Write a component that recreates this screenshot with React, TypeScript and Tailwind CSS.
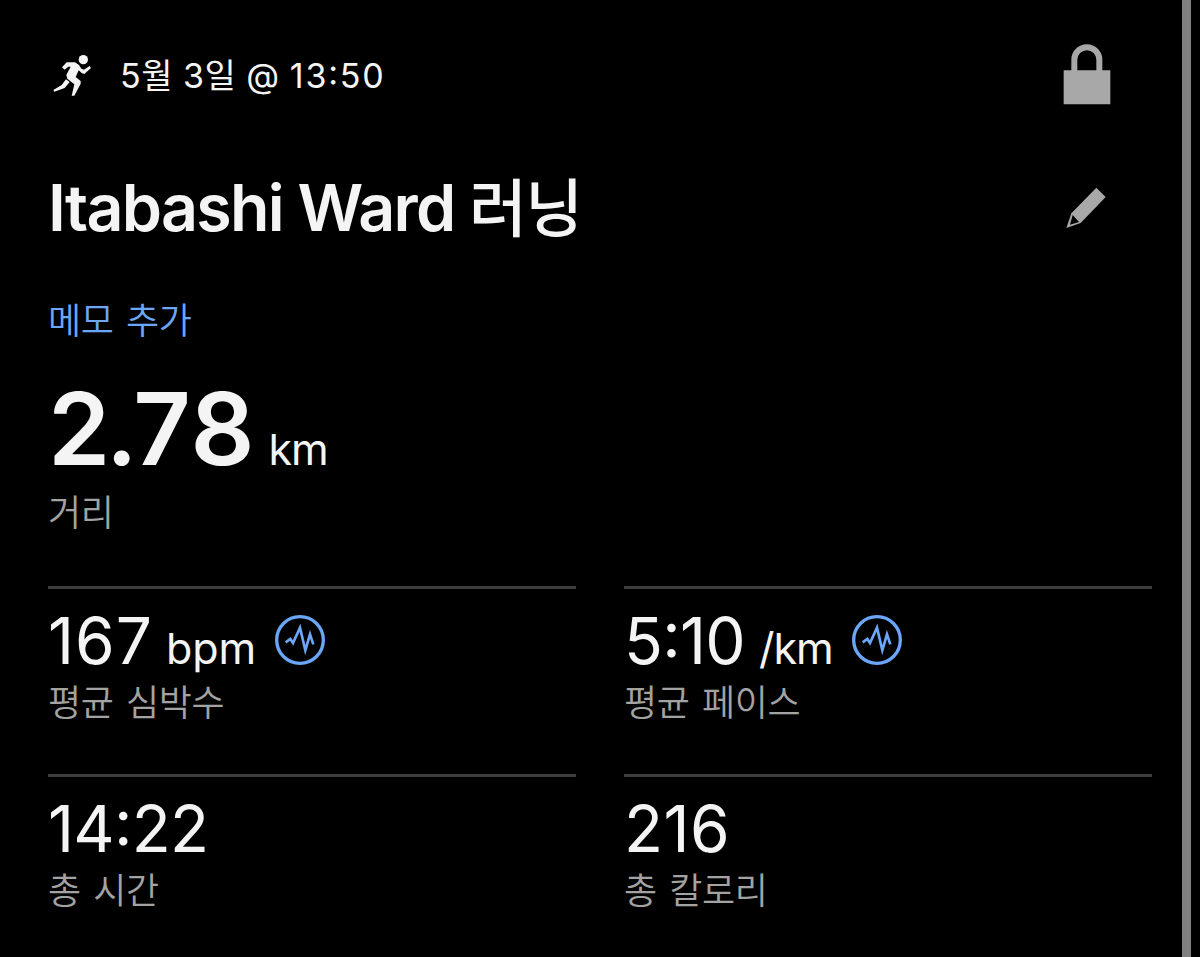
import type { ReactNode } from "react";

function RunnerIcon() {
  return (
    <svg className="h-[42px] w-[39px]" viewBox="40 41 117 126" fill="currentColor">
      <circle cx="131" cy="58" r="14" />
      <path d="M67 81 81 66h25l12 8 7 11 8 3 17-11 4 6-20 18-8-3-9-8-9 20 15 12v8l-19 36h-8l8-34-21-17-3-11 13-25h-7L75 88Z" />
      <path d="m79 117 11 8-15 18-31 11-3-5 25-15Z" />
    </svg>
  );
}

function LockIcon() {
  return (
    <svg className="h-[61px] w-12" viewBox="68 43 144 183">
      <path
        d="M102 126V90a37.5 37.5 0 0 1 75 0v36"
        fill="none"
        stroke="currentColor"
        strokeWidth="18"
      />
      <path d="M70 122h140v102H70z" fill="currentColor" />
    </svg>
  );
}

function PencilIcon() {
  return (
    <svg className="h-[42px] w-[42px]" viewBox="77 469 126 126" fill="currentColor">
      <path
        fillRule="evenodd"
        d="m81 592 15-44 75-77 28 28-75 78ZM100 553l-8 29 27-8Z"
      />
    </svg>
  );
}

function PulseIcon() {
  return (
    <svg
      className="h-[50px] w-[50px] text-[#6ba6f8]"
      viewBox="703 106 150 150"
      fill="none"
      stroke="currentColor"
    >
      <circle cx="778" cy="181" r="70" strokeWidth="10" />
      <path d="m735 188 14-10 8 12 21-46 16 68 14-48 10 30" strokeWidth="8" />
    </svg>
  );
}

function Label({ children }: { children: ReactNode }) {
  return (
    <div className="h-12 whitespace-nowrap font-['Noto_Sans_CJK_KR',sans-serif] text-[36px] font-[350] leading-[48px] tracking-[-0.4px] [word-spacing:5px] text-[#a3a3a3]">
      {children}
    </div>
  );
}

type StatProps = {
  value: string;
  valueClass: string;
  unit?: string;
  unitClass?: string;
  label: string;
  chart?: boolean;
};

function Stat({ value, valueClass, unit, unitClass, label, chart }: StatProps) {
  return (
    <div className="h-[188px] border-t-[3px] border-[#3d3d3d] pt-4">
      <div className="flex h-[71px] items-start">
        <div className="flex items-baseline leading-[71px]">
          <span className={`text-[64px] [font-feature-settings:'case'] ${valueClass}`}>
            {value}
          </span>
          {unit && <span className={`text-[43px] ${unitClass}`}>{unit}</span>}
        </div>
        {chart && (
          <div className="ml-[19px] mt-2.5">
            <PulseIcon />
          </div>
        )}
      </div>
      <Label>{label}</Label>
    </div>
  );
}

const stats: StatProps[] = [
  {
    value: "167",
    valueClass: "tracking-[1px]",
    unit: "bpm",
    unitClass: "ml-[13px] tracking-[0px]",
    label: "평균 심박수",
    chart: true,
  },
  {
    value: "5:10",
    valueClass: "tracking-[-0.7px]",
    unit: "/km",
    unitClass: "ml-3.5 tracking-[-1px]",
    label: "평균 페이스",
    chart: true,
  },
  { value: "14:22", valueClass: "tracking-[-0.7px]", label: "총 시간" },
  { value: "216", valueClass: "tracking-[0.5px]", label: "총 칼로리" },
];

export default function App() {
  return (
    <div className="flex h-[957px] w-[1200px] overflow-hidden bg-black font-['Inter','Noto_Sans_CJK_KR',sans-serif] text-[#f4f4f4]">
      <main className="w-[1182px] pl-12 pr-[30px] pt-[45px]">
        <header className="flex h-[60px] items-center justify-between pr-[41.5px]">
          <div className="flex items-center">
            <div className="ml-[5px]">
              <RunnerIcon />
            </div>
            <span className="ml-7 mt-px whitespace-pre text-[34px] font-[380] leading-[60px] tracking-[0.5px]">
              5월 3일 @{" "}
              <span className="tracking-[1.8px] [font-feature-settings:'case']">
                13:50
              </span>
            </span>
          </div>
          <div className="-mt-px text-[#a8a8a8]">
            <LockIcon />
          </div>
        </header>

        <div className="mt-[62px] flex h-20 items-center justify-between pr-[45px]">
          <h1 className="mt-px whitespace-nowrap text-[64.5px] font-semibold leading-[80px] tracking-[-1.7px]">
            Itabashi Ward{" "}
            <span className="text-[63px] font-medium">러닝</span>
          </h1>
          <div className="mt-px text-[#a8a8a8]">
            <PencilIcon />
          </div>
        </div>

        <a
          href="#memo"
          className="mt-[47px] block h-12 font-['Noto_Sans_CJK_KR',sans-serif] text-[36px] font-[350] leading-[48px] tracking-[-0.4px] [word-spacing:5px] text-[#6ba6f8]"
        >
          메모 추가
        </a>

        <div className="mt-[37px] flex h-[100px] items-baseline leading-[100px]">
          <span className="text-[100px] font-semibold tracking-[1px]">
            <span className="tracking-[-4.5px]">2.</span>78
          </span>
          <span className="ml-[13px] text-[43px] tracking-[-1px]">km</span>
        </div>
        <div className="mt-[7px]">
          <Label>거리</Label>
        </div>

        <section className="mt-[52px] grid grid-cols-2 gap-x-12">
          {stats.map((stat) => (
            <Stat key={stat.label} {...stat} />
          ))}
        </section>
      </main>
      <div className="w-[9px] bg-[#808080]" />
    </div>
  );
}
